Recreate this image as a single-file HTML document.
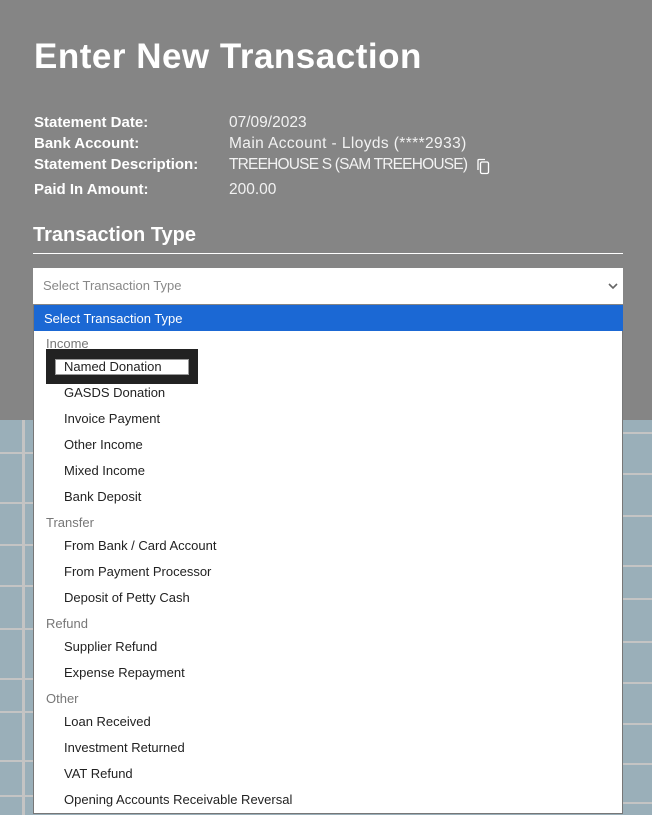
<!DOCTYPE html>
<html><head><style>
*{margin:0;padding:0;box-sizing:border-box}
body{width:652px;height:815px;overflow:hidden;position:relative;font-family:"Liberation Sans",sans-serif;background:#9aafb9}
.top{position:absolute;left:0;top:0;width:652px;height:420px;background:#858585}
.hl{position:absolute;height:2px;background:#c4c4c4}
.vl{position:absolute;width:3px;background:#c4c4c4}
.t{position:absolute;color:#fff;white-space:nowrap}
h1{position:absolute;left:34px;top:37px;font-size:35px;font-weight:bold;color:#fff;letter-spacing:0.5px}
.lbl{font-weight:bold;font-size:15px}
.val{font-size:15.5px;color:#f2f2f2}
.sel{position:absolute;left:33px;top:268px;width:590px;height:36px;background:#fff;font-size:13px;color:#888;padding:10px 0 0 10px}
.list{position:absolute;left:33px;top:305px;width:590px;height:509px;background:#fff;border:1px solid #777;border-top:none}
.opt{position:absolute;left:30px;font-size:13px;color:#222;white-space:nowrap}
.grp{position:absolute;left:12px;font-size:13px;color:#777}
</style></head><body>
<div class="top"></div>
<div class="hl" style="left:0;top:452px;width:33px"></div>
<div class="hl" style="left:0;top:502px;width:33px"></div>
<div class="hl" style="left:0;top:544px;width:33px"></div>
<div class="hl" style="left:0;top:585px;width:33px"></div>
<div class="hl" style="left:0;top:628px;width:33px"></div>
<div class="hl" style="left:0;top:678px;width:33px"></div>
<div class="hl" style="left:0;top:711px;width:33px"></div>
<div class="hl" style="left:0;top:760px;width:33px"></div>
<div class="hl" style="left:0;top:795px;width:33px"></div>
<div class="vl" style="left:22px;top:420px;height:395px"></div>
<div class="hl" style="left:623px;top:432px;width:29px"></div>
<div class="hl" style="left:623px;top:473px;width:29px"></div>
<div class="hl" style="left:623px;top:515px;width:29px"></div>
<div class="hl" style="left:623px;top:565px;width:29px"></div>
<div class="hl" style="left:623px;top:598px;width:29px"></div>
<div class="hl" style="left:623px;top:641px;width:29px"></div>
<div class="hl" style="left:623px;top:682px;width:29px"></div>
<div class="hl" style="left:623px;top:723px;width:29px"></div>
<div class="hl" style="left:623px;top:763px;width:29px"></div>
<div class="hl" style="left:623px;top:802px;width:29px"></div>

<h1>Enter New Transaction</h1>
<div class="t lbl" style="left:34px;top:114px">Statement Date:</div>
<div class="t lbl" style="left:34px;top:135px">Bank Account:</div>
<div class="t lbl" style="left:34px;top:156px">Statement Description:</div>
<div class="t lbl" style="left:34px;top:181px">Paid In Amount:</div>
<div class="t val" style="left:229px;top:114px">07/09/2023</div>
<div class="t val" style="left:229px;top:135px;letter-spacing:0.4px">Main Account - Lloyds (****2933)</div>
<div class="t val" style="left:229px;top:156px;letter-spacing:-0.8px">TREEHOUSE S (SAM TREEHOUSE)</div>
<svg style="position:absolute;left:476px;top:158px" width="14" height="17" viewBox="0 0 14 17"><path d="M2 12V2.5Q2 1.5 3 1.5H9" fill="none" stroke="#fff" stroke-width="1.3"/><rect x="4.5" y="4" width="8" height="11.5" rx="1.5" fill="none" stroke="#fff" stroke-width="1.3"/></svg>
<div class="t val" style="left:229px;top:181px">200.00</div>
<div class="t" style="left:33px;top:224px;font-size:20px;font-weight:bold">Transaction Type</div>
<div style="position:absolute;left:33px;top:253px;width:590px;height:1px;background:#fff"></div>
<div class="sel">Select Transaction Type</div>
<svg style="position:absolute;left:608px;top:282px" width="10" height="8" viewBox="0 0 10 8"><path d="M1 2L5 6L9 2" fill="none" stroke="#666" stroke-width="1.6"/></svg>
<div class="list">
<div style="position:absolute;left:0;top:0;width:589px;height:26px;background:#1b68d4;color:#fff;font-size:13px;padding:6px 0 0 10px">Select Transaction Type</div>
<div class="grp" style="top:31px">Income</div>
<div style="position:absolute;left:12px;top:44px;width:152px;height:35px;background:#222"></div>
<div style="position:absolute;left:21px;top:54px;width:134px;height:16px;background:#fff;border:1px solid #999"></div>
<div class="opt" style="top:54px">Named Donation</div>
<div class="opt" style="top:80px">GASDS Donation</div>
<div class="opt" style="top:106px">Invoice Payment</div>
<div class="opt" style="top:132px">Other Income</div>
<div class="opt" style="top:158px">Mixed Income</div>
<div class="opt" style="top:184px">Bank Deposit</div>
<div class="grp" style="top:210px">Transfer</div>
<div class="opt" style="top:233px">From Bank / Card Account</div>
<div class="opt" style="top:259px">From Payment Processor</div>
<div class="opt" style="top:285px">Deposit of Petty Cash</div>
<div class="grp" style="top:311px">Refund</div>
<div class="opt" style="top:334px">Supplier Refund</div>
<div class="opt" style="top:360px">Expense Repayment</div>
<div class="grp" style="top:386px">Other</div>
<div class="opt" style="top:409px">Loan Received</div>
<div class="opt" style="top:435px">Investment Returned</div>
<div class="opt" style="top:461px">VAT Refund</div>
<div class="opt" style="top:487px">Opening Accounts Receivable Reversal</div>
</div>
</body></html>
